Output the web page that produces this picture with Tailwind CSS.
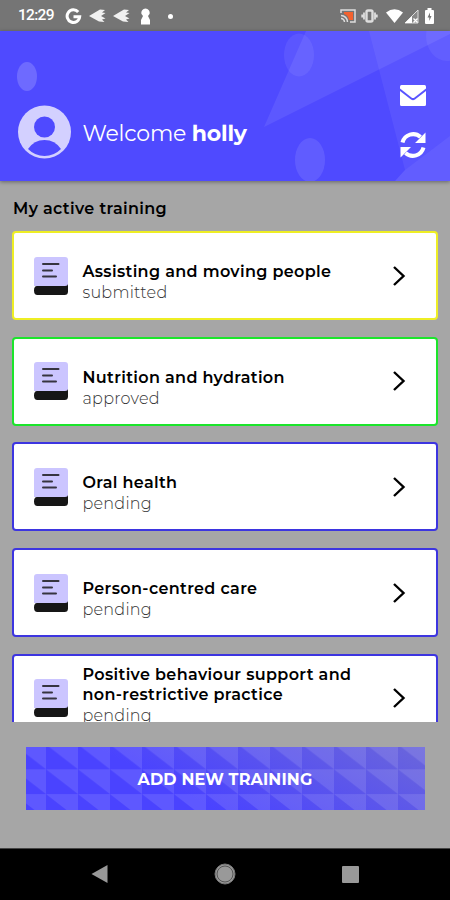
<!DOCTYPE html>
<html lang="en">
<head>
  <meta charset="UTF-8" />
  <meta name="viewport" content="width=device-width, initial-scale=1.0"/>
  <title>My active training</title>
  <script src="https://cdn.jsdelivr.net/npm/@tailwindcss/browser@4"></script>
</head>
<body class="bg-[#a6a6a6]">
<svg class="hidden">
  <symbol id="book" viewBox="0 0 34 38">
    <path d="M3 0H31Q34 0 34 3V29H0V3Q0 0 3 0Z" fill="#cbc5ff"/>
    <path d="M3 29H31Q34 29 34 26.500V34.500Q34 38 30.500 38H3.500Q0 38 0 33.500Q0 29 3 29Z" fill="#161616"/>
    <path d="M9 7H24.500M9 13.500H18M9 19.500H22" stroke="#36343f" stroke-width="2" stroke-linecap="round"/>
  </symbol>
  <symbol id="chevron" viewBox="0 0 14 22">
    <path d="M2 2L11.500 11L2 20" fill="none" stroke="#000" stroke-width="2.400"/>
  </symbol>
</svg>
<div class="w-[450px] h-[900px] flex flex-col overflow-hidden font-['Montserrat','Inter',sans-serif] text-black">
  <!-- status bar -->
  <div class="h-[31px] shrink-0 bg-[#757575] flex items-center justify-between pl-[18px] pr-[16px] text-white">
    <div class="flex items-center pt-px">
      <span class="w-[47px] font-['Roboto',sans-serif] font-medium text-[15.5px] tracking-[-0.7px] leading-none whitespace-nowrap">12:29</span>
      <svg class="w-[17px] h-[17px]" viewBox="0 0 17 17" fill="none" stroke="#fff" stroke-width="3"><path d="M13.200 4A6.300 6.300 0 1 0 14.700 8.700H8.500"/></svg>
      <svg class="w-[17px] h-[16px] ml-[7px]" viewBox="0 0 17 16" fill="#f0f0f0"><path d="M0 8L11 1.500L16 2L13 4.500L16.500 5L12 8L16.500 10.500L13 11.500L15.500 14L10 13.500Z"/></svg>
      <svg class="w-[17px] h-[16px] ml-[7px]" viewBox="0 0 17 16" fill="#f0f0f0"><path d="M0 8L11 1.500L16 2L13 4.500L16.500 5L12 8L16.500 10.500L13 11.500L15.500 14L10 13.500Z"/></svg>
      <svg class="w-[11px] h-[17px] ml-[10px]" viewBox="0 0 11 17" fill="#fff"><path d="M5.500 0.500A4.300 4.300 0 0 1 9.500 6L8 8L10 12V16.500H1V12L3 8L1.500 6A4.300 4.300 0 0 1 5.500 0.500Z"/></svg>
      <span class="w-[5px] h-[5px] rounded-full bg-white ml-[17px]"></span>
    </div>
    <div class="flex items-center pt-px">
      <svg class="w-[16px] h-[14px]" viewBox="0 0 16 14" fill="none" stroke="#ddd" stroke-width="1.500"><path d="M4 3H13V11H9Q8 6 4 5Z" fill="#f4622f" stroke="none"/><path d="M1 4V1H15V13H10M1 6.500A6.500 6.500 0 0 1 7.500 13M1 9.500A3.500 3.500 0 0 1 4.500 13"/></svg>
      <svg class="w-[17px] h-[14px] ml-[5px]" viewBox="0 0 17 14" fill="none" stroke="#ddd" stroke-width="2.400"><rect x="5.500" y="1.500" width="6" height="11" rx="1.500"/><path d="M3 3.500V10.500M1.200 5.500V8.500M14 3.500V10.500M15.800 5.500V8.500" stroke-width="1.800"/></svg>
      <svg class="w-[17px] h-[14px] ml-[8px]" viewBox="0 0 17 14" fill="#fff"><path d="M0 3.500Q8.500 -3 17 3.500L8.500 14Z"/></svg>
      <svg class="w-[15px] h-[15px] ml-[1px]" viewBox="0 0 15 15"><path d="M1 14L14 1V14Z" fill="#888" stroke="#ddd"/><path d="M1 14L8 7V14Z" fill="#fff"/><path d="M9.500 9.500L13.500 13.500M13.500 9.500L9.500 13.500" stroke="#fff" stroke-width="1.300"/></svg>
      <svg class="w-[9px] h-[16px] ml-[6px]" viewBox="0 0 9 16"><path d="M0 3Q0 2 1 2H2.500V0H6.500V2H8Q9 2 9 3V15Q9 16 8 16H1Q0 16 0 15Z" fill="#fff"/><path d="M5 4.500L2.500 9.500H4.300V13L6.500 8H5Z" fill="#757575"/></svg>
    </div>
  </div>

  <!-- header -->
  <div class="relative h-[150px] shrink-0 bg-[#4f4aff] shadow-[0_1px_4px_rgba(0,0,0,0.4)]">
    <svg class="absolute inset-0 w-full h-full" viewBox="0 0 450 150" fill="#fff">
      <path d="M264 96L306 0H450V3L424 16Z" fill-opacity=".08"/>
      <path d="M369 0H450V105L405 139Z" fill-opacity=".06"/>
      <path d="M395 150L405 139L450 105V150Z" fill-opacity=".11"/>
      <ellipse cx="27" cy="45.500" rx="10" ry="14.500" fill-opacity=".18"/>
      <ellipse cx="299" cy="24" rx="15" ry="21.500" fill-opacity=".07"/>
      <ellipse cx="310" cy="129" rx="15" ry="22" fill-opacity=".1"/>
      <ellipse cx="447" cy="5" rx="21" ry="25" fill-opacity=".06"/>
    </svg>
    <div class="relative h-full flex items-start justify-between pl-[18px] pr-[24px]">
      <div class="flex items-center pt-[74px]">
        <svg class="w-[53px] h-[54px]" viewBox="0 0 53 54"><circle cx="26.500" cy="27" r="26.500" fill="#d3d0ff"/><circle cx="26.500" cy="22" r="10.500" fill="#4f4aff"/><path d="M10 44Q16 35 26.500 35T43 44Q36 51 26.500 51T10 44Z" fill="#4f4aff"/></svg>
        <h1 class="ml-[11.500px] pt-[3px] text-[22px] leading-[30px] tracking-[-0.2px] font-[450] text-white whitespace-nowrap">Welcome <b class="font-bold">holly</b></h1>
      </div>
      <div class="flex flex-col items-center pt-[54px] gap-[25px]">
        <svg class="w-[26px] h-[21px]" viewBox="0 0 26 21" fill="#fff"><path d="M1.500 0H24.500Q26 0 26 1.500V3.500L14.500 12.500Q13 13.500 11.500 12.500L0 3.500V1.500Q0 0 1.500 0Z"/><path d="M0 6L11 14.500Q13 15.800 15 14.500L26 6V19.500Q26 21 24.500 21H1.500Q0 21 0 19.500Z"/></svg>
        <svg class="w-[26px] h-[28px]" viewBox="0 0 26 28"><path d="M2.500 11.500A11 11 0 0 1 20.500 6M23.500 16.500A11 11 0 0 1 5.500 22" fill="none" stroke="#fff" stroke-width="4"/><path d="M25.500 1.500V12H15Z M0.500 26.500V16H11Z" fill="#fff"/></svg>
      </div>
    </div>
  </div>

  <h2 class="shrink-0 h-[49px] pt-[17px] pl-[13px] text-[16px] leading-[22px] font-semibold tracking-[0.35px]">My active training</h2>

  <!-- training list, last card is cut by the scroll area -->
  <div class="h-[492px] shrink-0 overflow-hidden flex flex-col gap-[16.7px] px-[12px] pt-px">
    <div class="h-[89px] shrink-0 flex items-center bg-white border-2 border-[#eeee24] rounded-[4px] pl-[20px] pr-[30px]">
      <svg class="w-[34px] h-[38px]"><use href="#book"/></svg>
      <div class="flex-1 ml-[14.500px] pt-[15px]">
        <h3 class="text-[16px] leading-5 font-semibold tracking-[0.35px]">Assisting and moving people</h3>
        <p class="text-[16px] leading-[22px] font-light tracking-[0.25px] text-[#333]">submitted</p>
      </div>
      <svg class="w-[14px] h-[22px]"><use href="#chevron"/></svg>
    </div>
    <div class="h-[89px] shrink-0 flex items-center bg-white border-2 border-[#1be52b] rounded-[4px] pl-[20px] pr-[30px]">
      <svg class="w-[34px] h-[38px]"><use href="#book"/></svg>
      <div class="flex-1 ml-[14.500px] pt-[15px]">
        <h3 class="text-[16px] leading-5 font-semibold tracking-[0.35px]">Nutrition and hydration</h3>
        <p class="text-[16px] leading-[22px] font-light tracking-[0.25px] text-[#333]">approved</p>
      </div>
      <svg class="w-[14px] h-[22px]"><use href="#chevron"/></svg>
    </div>
    <div class="h-[89px] shrink-0 flex items-center bg-white border-2 border-[#3d35e0] rounded-[4px] pl-[20px] pr-[30px]">
      <svg class="w-[34px] h-[38px]"><use href="#book"/></svg>
      <div class="flex-1 ml-[14.500px] pt-[15px]">
        <h3 class="text-[16px] leading-5 font-semibold tracking-[0.35px]">Oral health</h3>
        <p class="text-[16px] leading-[22px] font-light tracking-[0.25px] text-[#333]">pending</p>
      </div>
      <svg class="w-[14px] h-[22px]"><use href="#chevron"/></svg>
    </div>
    <div class="h-[89px] shrink-0 flex items-center bg-white border-2 border-[#3d35e0] rounded-[4px] pl-[20px] pr-[30px]">
      <svg class="w-[34px] h-[38px]"><use href="#book"/></svg>
      <div class="flex-1 ml-[14.500px] pt-[15px]">
        <h3 class="text-[16px] leading-5 font-semibold tracking-[0.35px]">Person-centred care</h3>
        <p class="text-[16px] leading-[22px] font-light tracking-[0.25px] text-[#333]">pending</p>
      </div>
      <svg class="w-[14px] h-[22px]"><use href="#chevron"/></svg>
    </div>
    <div class="h-[89px] shrink-0 flex items-center bg-white border-2 border-[#3d35e0] rounded-[4px] pl-[20px] pr-[30px]">
      <svg class="w-[34px] h-[38px]"><use href="#book"/></svg>
      <div class="flex-1 ml-[14.500px] pb-[4px]">
        <h3 class="text-[16px] leading-5 font-semibold tracking-[0.35px]">Positive behaviour support and<br>non-restrictive practice</h3>
        <p class="text-[16px] leading-[22px] font-light tracking-[0.25px] text-[#333]">pending</p>
      </div>
      <svg class="w-[14px] h-[22px]"><use href="#chevron"/></svg>
    </div>
  </div>

  <div class="flex-1 px-[25.500px] pt-[25px]">
    <button class="relative block w-full h-[63px] pt-[2px] text-white">
      <svg class="absolute inset-0 w-full h-full" viewBox="0 0 399 63" preserveAspectRatio="none">
        <defs>
          <linearGradient id="fade" gradientUnits="userSpaceOnUse" x1="190" y1="63" x2="280" y2="-110">
            <stop offset="0" stop-color="#4a43ff"/><stop offset="1" stop-color="#7470d0"/>
          </linearGradient>
          <pattern id="tri" width="32" height="24.800" patternUnits="userSpaceOnUse" x="-12" y="-2.500">
            <path d="M0 0H32V24.800Z" fill="#fff" fill-opacity=".11"/>
          </pattern>
        </defs>
        <rect width="399" height="63" fill="url(#fade)"/>
        <rect width="399" height="63" fill="url(#tri)"/>
      </svg>
      <span class="relative text-[16px] font-bold tracking-[0.15px]">ADD NEW TRAINING</span>
    </button>
  </div>

  <!-- navigation bar -->
  <div class="h-[52px] shrink-0 bg-black border-t border-[#444] flex items-center justify-between px-[91px] pb-px">
    <svg class="w-[17px] h-[18px]" viewBox="0 0 17 18"><path d="M0.500 9L16.500 0V18Z" fill="#999"/></svg>
    <svg class="w-[22px] h-[22px]" viewBox="0 0 22 22"><circle cx="11" cy="11" r="10" fill="#999" stroke="#777"/><circle cx="11" cy="11" r="8" fill="none" stroke="#555"/></svg>
    <div class="w-[17px] h-[17px] bg-[#999] rounded-[1px]"></div>
  </div>
</div>
</body>
</html>
